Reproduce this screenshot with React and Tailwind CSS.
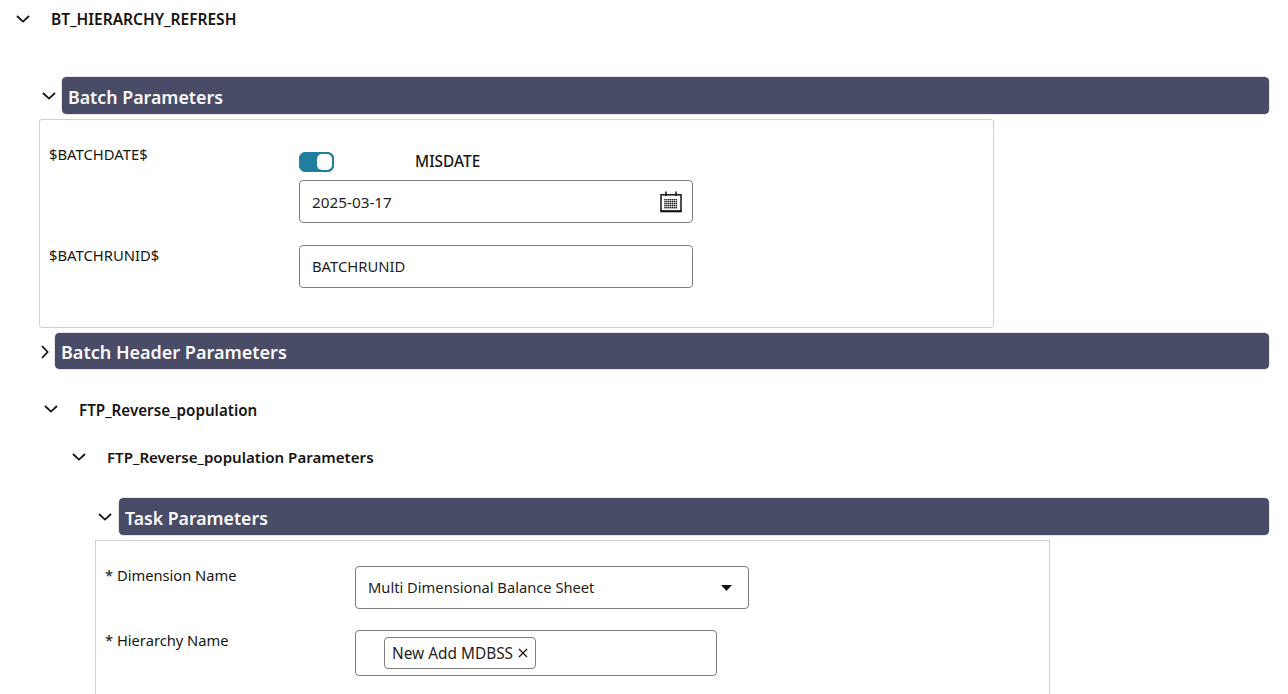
const font = "font-['Noto_Sans',sans-serif]";

function Down({ className = "" }) {
  return (
    <svg width="14" height="8" viewBox="0 0 14 8" fill="none" className={className}>
      <path d="M1 1 L7 6.6 L13 1" stroke="#161513" strokeWidth="1.8" />
    </svg>
  );
}

function Right({ className = "" }) {
  return (
    <svg width="8" height="14" viewBox="0 0 8 14" fill="none" className={className}>
      <path d="M1 1 L6.6 7 L1 13" stroke="#161513" strokeWidth="1.8" />
    </svg>
  );
}

function Bar({ children, className = "" }) {
  return (
    <div className={`flex items-center self-start rounded-[4px] bg-[#484c67] pl-[6px] font-semibold text-[#fbf9f8] outline outline-1 outline-[#e6e6ea] ${className}`}>
      {children}
    </div>
  );
}

function Calendar() {
  const cells = [];
  for (let y = 0; y < 5; y++) for (let x = 0; x < 7; x++) cells.push(<rect key={`${x}-${y}`} x={4.3 + x * 1.9} y={8 + y * 2} width="1.4" height="1.4" fill="#161513" />);
  return (
    <svg width="22" height="22" viewBox="0 0 22 22" fill="none">
      <rect x="1" y="3.8" width="20" height="16.6" stroke="#161513" strokeWidth="1.5" fill="#fff" />
      <path d="M6 0.5v4.5M16 0.5v4.5" stroke="#161513" strokeWidth="1.5" />
      <rect x="0.5" y="19.2" width="21" height="2" fill="#161513" />
      {cells}
    </svg>
  );
}

function Field({ children, className = "" }) {
  return (
    <div className={`flex items-center rounded-[4px] border border-[#807d7b] bg-white text-[#1f1e1d] ${className}`}>
      {children}
    </div>
  );
}

export default function App() {
  return (
    <div className={`${font} h-[694px] w-[1288px] overflow-hidden bg-white text-[#161513]`}>
      <div className="flex h-[38px] items-center pl-[16px]">
        <Down />
        <span className="ml-[21px] mt-[2px] text-[15.5px] font-semibold">BT_HIERARCHY_REFRESH</span>
      </div>

      <div className="mt-[39px] flex h-[38px] items-center pl-[42px] pr-[19px]">
        <Down className="mr-[6px] shrink-0" />
        <Bar className="h-[37px] flex-1 pt-[3px] text-[17.8px]">Batch Parameters</Bar>
      </div>

      <div className="ml-[39px] mt-[4px] h-[209px] w-[955px] rounded-[3px] border border-[#d0d0d0] pl-[9px] pt-[25px] text-[14.8px]">
        <div className="flex">
          <div className="-mt-[1px] w-[250px] leading-[20px]">$BATCHDATE$</div>
          <div>
            <div className="mt-[7px] flex h-[20px] items-center">
              <div className="flex h-[20px] w-[35px] items-center justify-end rounded-[6px] border border-[#227e9e] bg-[#227e9e] pr-[1px]">
                <div className="h-[16px] w-[15px] rounded-[5px] bg-white" />
              </div>
              <span className="ml-[81px] text-[15.4px] font-medium">MISDATE</span>
            </div>
            <Field className="mt-[8px] h-[43px] w-[394px] justify-between pl-[12px] pr-[10px]">
              <span className="mt-[2px] text-[15.3px]">2025-03-17</span>
              <Calendar />
            </Field>
          </div>
        </div>
        <div className="mt-[22px] flex">
          <div className="w-[250px] leading-[20px]">$BATCHRUNID$</div>
          <Field className="h-[43px] w-[394px] pl-[12px]">BATCHRUNID</Field>
        </div>
      </div>

      <div className="mt-[5px] flex h-[37px] items-center pl-[41px] pr-[19px]">
        <Right className="mr-[6px] shrink-0" />
        <Bar className="h-[36px] flex-1 pt-[2px] text-[18px]">Batch Header Parameters</Bar>
      </div>

      <div className="mt-[22px] flex h-[38px] items-center pl-[44px]">
        <Down className="-mt-[4px]" />
        <span className="mb-[2px] ml-[21px] text-[15.2px] font-semibold">FTP_Reverse_population</span>
      </div>

      <div className="mt-[9px] flex h-[38px] items-center pl-[72px]">
        <Down className="-mt-[2px]" />
        <span className="mb-[2px] ml-[21px] text-[15.1px] font-semibold">FTP_Reverse_population Parameters</span>
      </div>

      <div className="mt-[21px] flex h-[38px] items-center pl-[98px] pr-[19px]">
        <Down className="mr-[7px] shrink-0" />
        <Bar className="h-[37px] flex-1 pt-[3px] text-[17.7px]">Task Parameters</Bar>
      </div>

      <div className="ml-[95px] mt-[4px] h-[300px] w-[955px] border border-[#d0d0d0] pl-[9px] pt-[25px] text-[14.7px]">
        <div className="flex">
          <div className="-mt-[1px] w-[250px] leading-[20px]">* Dimension Name</div>
          <Field className="h-[43px] w-[394px] justify-between pl-[12px] pr-[16px]">
            <span>Multi Dimensional Balance Sheet</span>
            <svg width="11" height="6" viewBox="0 0 11 6"><path d="M0 0h11L5.5 6z" fill="#161513" /></svg>
          </Field>
        </div>
        <div className="mt-[21px] flex">
          <div className="w-[250px] leading-[20px]">* Hierarchy Name</div>
          <Field className="h-[46px] w-[362px] pl-[28px]">
            <div className="flex h-[32px] items-center rounded-[4px] border border-[#807d7b] pl-[7px] pr-[7px]">
              <span className="mt-[2px] text-[15.4px]">New Add MDBSS</span>
              <svg width="10" height="10" viewBox="0 0 10 10" className="ml-[5px]"><path d="M1 1l8 8M9 1l-8 8" stroke="#161513" strokeWidth="1.3" /></svg>
            </div>
          </Field>
        </div>
      </div>
    </div>
  );
}
